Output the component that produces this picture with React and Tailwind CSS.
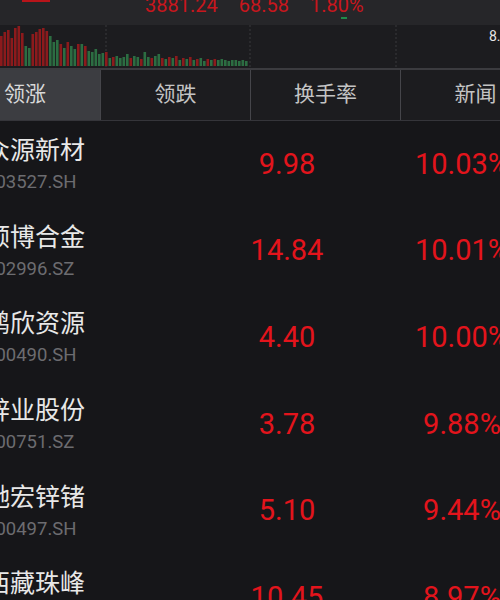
import React from 'react';

const bars = [
  [30, 'r'], [34, 'r'], [36, 'r'], [28, 'r'], [38, 'r'], [40, 'r'], [33, 'r'], [20, 'g'], [18, 'g'], [32, 'r'],
  [34, 'r'], [37, 'r'], [38, 'r'], [35, 'r'], [30, 'g'], [24, 'g'], [26, 'g'], [22, 'r'], [18, 'g'], [24, 'r'],
  [20, 'g'], [17, 'g'], [22, 'r'], [22, 'g'], [20, 'r'], [15, 'g'], [14, 'g'], [17, 'g'], [12, 'g'], [13, 'g'],
  [14, 'r'], [8, 'g'], [9, 'r'], [10, 'g'], [8, 'g'], [9, 'g'], [12, 'g'], [8, 'r'], [10, 'g'], [9, 'g'],
  [7, 'r'], [14, 'g'], [9, 'g'], [8, 'r'], [10, 'g'], [12, 'g'], [8, 'r'], [7, 'g'], [9, 'r'], [8, 'g'],
  [10, 'r'], [6, 'g'], [8, 'r'], [7, 'g'], [9, 'r'], [6, 'g'], [7, 'r'], [8, 'g'], [5, 'g'], [7, 'r'],
  [6, 'g'], [7, 'r'], [6, 'g'], [7, 'g'], [6, 'g'], [5, 'g'], [6, 'g'], [6, 'g'], [5, 'g'], [6, 'g'], [5, 'g'],
];

const stocks = [
  { name: '众源新材', code: '603527.SH', price: '9.98', pct: '10.03%' },
  { name: '顺博合金', code: '002996.SZ', price: '14.84', pct: '10.01%' },
  { name: '鹏欣资源', code: '600490.SH', price: '4.40', pct: '10.00%' },
  { name: '锌业股份', code: '000751.SZ', price: '3.78', pct: '9.88%' },
  { name: '驰宏锌锗', code: '600497.SH', price: '5.10', pct: '9.44%' },
  { name: '西藏珠峰', code: '600338.SH', price: '10.45', pct: '8.97%' },
];

const tabs = ['领涨', '领跌', '换手率', '新闻'];

function VolumeChart() {
  return (
    <svg width="500" height="43" viewBox="0 0 500 43" className="block">
      {[106, 250, 396].map((x) => (
        <line key={x} x1={x} y1="0" x2={x} y2="43" stroke="#38383c" strokeWidth="1" strokeDasharray="2 2" />
      ))}
      {bars.map(([h, c], i) => (
        <rect key={i} x={i * 3.5} y={41 - h} width="2.6" height={h} fill={c === 'r' ? '#8c1a1c' : '#2c6d42'} />
      ))}
    </svg>
  );
}

export default function App() {
  return (
    <div className="w-[500px] h-[600px] overflow-hidden bg-[#161619] font-['Roboto','Noto_Sans_CJK_SC',sans-serif]">
      {/* index header */}
      <div className="relative h-[25px] bg-[#262629] overflow-hidden">
        <div className="absolute left-[22px] top-0 w-[28px] h-[2px] bg-[#b8141a]" />
        <div className="flex gap-[21px] pl-[145px] mt-[-5px] text-[20px] leading-none text-[#c8161d] whitespace-nowrap">
          <span>3881.24</span>
          <span>68.58</span>
          <span>1.80%</span>
        </div>
        <div className="absolute left-[341px] top-[17px] w-[6px] h-[2px] bg-[#1f8a4a]" />
      </div>

      {/* volume chart */}
      <div className="relative h-[43px] bg-[#1c1c1f]">
        <VolumeChart />
        <span className="absolute left-[489px] top-[4px] text-[14px] leading-none text-[#e6e6e6]">8.</span>
      </div>
      <div className="h-[2px] bg-[#3b3b3f]" />

      {/* tabs */}
      <div className="flex h-[51px] border-b border-[#35353a] overflow-hidden">
        {tabs.map((t, i) => (
          <div
            key={t}
            className={
              i === 0
                ? 'shrink-0 w-[150px] ml-[-50px] flex items-center justify-center bg-[#3c3d41] text-[21px] text-[#d8d8d8]'
                : 'shrink-0 w-[150px] flex items-center justify-center border-l border-[#45454a] bg-[#1c1c1f] text-[21px] text-[#c4c4c4]'
            }
          >
            {t}
          </div>
        ))}
      </div>

      {/* list */}
      <div className="overflow-hidden">
        {stocks.map((s) => (
          <div key={s.code} className="flex items-center h-[86.6px] whitespace-nowrap">
            <div className="shrink-0 w-[212px] ml-[-15px] flex flex-col pt-[2px]">
              <span className="text-[25px] leading-[31px] text-[#e8e8e8]">{s.name}</span>
              <span className="text-[18.5px] leading-[26px] mt-[3px] text-[#6c6c70]">{s.code}</span>
            </div>
            <div className="shrink-0 w-[150px] ml-[15px] text-center text-[29px] leading-none text-[#e3141c]">{s.price}</div>
            <div className="shrink-0 w-[200px] text-center text-[29px] leading-none text-[#e3141c]">{s.pct}</div>
          </div>
        ))}
      </div>
    </div>
  );
}
